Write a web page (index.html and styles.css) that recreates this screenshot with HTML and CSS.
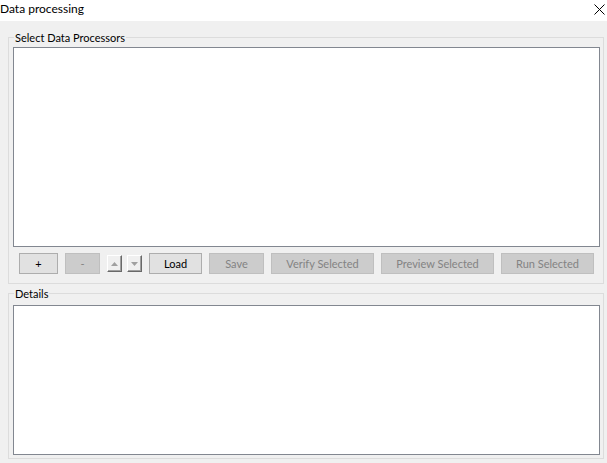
FILE: index.html
```html
<!DOCTYPE html>
<html>
<head>
<meta charset="utf-8">
<link rel="stylesheet" href="styles.css">
</head>
<body>
<div class="window">
  <div class="titlebar">
    <span class="title">Data processing</span>
    <svg class="close" width="11" height="11" viewBox="0 0 11 11"><path d="M0.5 0.5 L10.5 10.5 M10.5 0.5 L0.5 10.5" stroke="#000" stroke-width="1" fill="none"/></svg>
  </div>
  <div class="content">
    <fieldset class="group group-top">
      <legend>Select Data Processors</legend>
      <div class="listbox list-main"></div>
      <div class="toolbar">
        <button class="btn w-plus">+</button>
        <button class="btn w-minus" disabled>-</button>
        <div class="arrows">
          <span class="arrow-btn"><svg width="7" height="4" viewBox="0 0 7 4"><path d="M3.5 0 L7 4 L0 4 Z" fill="#a0a0a0"/></svg></span>
          <span class="arrow-btn"><svg width="7" height="4" viewBox="0 0 7 4"><path d="M0 0 L7 0 L3.5 4 Z" fill="#a0a0a0"/></svg></span>
        </div>
        <button class="btn w-load">Load</button>
        <button class="btn w-save" disabled>Save</button>
        <button class="btn w-verify" disabled>Verify Selected</button>
        <button class="btn w-preview" disabled>Preview Selected</button>
        <button class="btn w-run" disabled>Run Selected</button>
      </div>
    </fieldset>
    <fieldset class="group group-details">
      <legend>Details</legend>
      <div class="listbox list-details"></div>
    </fieldset>
  </div>
</div>
</body>
</html>
```
FILE: styles.css
```css
html, body {
  margin: 0;
  padding: 0;
}
body {
  width: 607px;
  height: 463px;
  overflow: hidden;
  background: #f0f0f0;
  font-family: "Lato", "Noto Sans", sans-serif;
  font-size: 11px;
  color: #000;
}
.window {
  display: flex;
  flex-direction: column;
  height: 463px;
}
.titlebar {
  height: 21px;
  background: #fff;
  display: flex;
  align-items: center;
  justify-content: space-between;
  padding: 0 1px 0 0;
}
.title {
  font-size: 12px;
  line-height: 16px;
  margin-top: -3px;
}
.close {
  margin-right: 1px;
  margin-top: -2px;
}
.content {
  padding: 9px 3px 0 8px;
  display: flex;
  flex-direction: column;
}
.group {
  margin: 0;
  border: 1px solid #dcdcdc;
  padding: 2px 3px 9px 4px;
  min-width: 0;
}
.group legend {
  padding: 0 1px;
  margin-left: 1px;
  line-height: 15px;
  font-size: 11px;
}
.group-details {
  margin-top: 2px;
  padding-bottom: 3px;
}
.listbox {
  background: #fff;
  border: 1px solid #828790;
}
.list-main {
  height: 198px;
}
.list-details {
  height: 148px;
  margin-top: 2px;
}
.toolbar {
  display: flex;
  align-items: center;
  margin-top: 6px;
  padding-left: 6px;
  gap: 7px;
}
.btn {
  flex: none;
  box-sizing: border-box;
  height: 21px;
  margin: 0;
  padding: 0;
  font-family: inherit;
  font-size: 11px;
  color: #000;
  background: #e1e1e1;
  border: 1px solid #adadad;
  border-radius: 0;
  line-height: 17px;
}
.btn:disabled {
  background: #cccccc;
  border-color: #bfbfbf;
  color: #838383;
}
.w-plus { width: 39px; }
.w-minus { width: 35px; }
.w-load { width: 53px; }
.w-save { width: 55px; }
.w-verify { width: 103px; }
.w-preview { width: 113px; }
.w-run { width: 93px; }
.arrows {
  display: flex;
  flex: none;
  gap: 5px;
}
.arrow-btn {
  width: 15px;
  height: 17px;
  box-sizing: border-box;
  background: #f0f0f0;
  border-top: 1px solid #fff;
  border-left: 1px solid #fff;
  border-right: 1px solid #696969;
  border-bottom: 1px solid #696969;
  box-shadow: inset -1px -1px 0 #a0a0a0;
  display: flex;
  align-items: center;
  justify-content: center;
}
```
